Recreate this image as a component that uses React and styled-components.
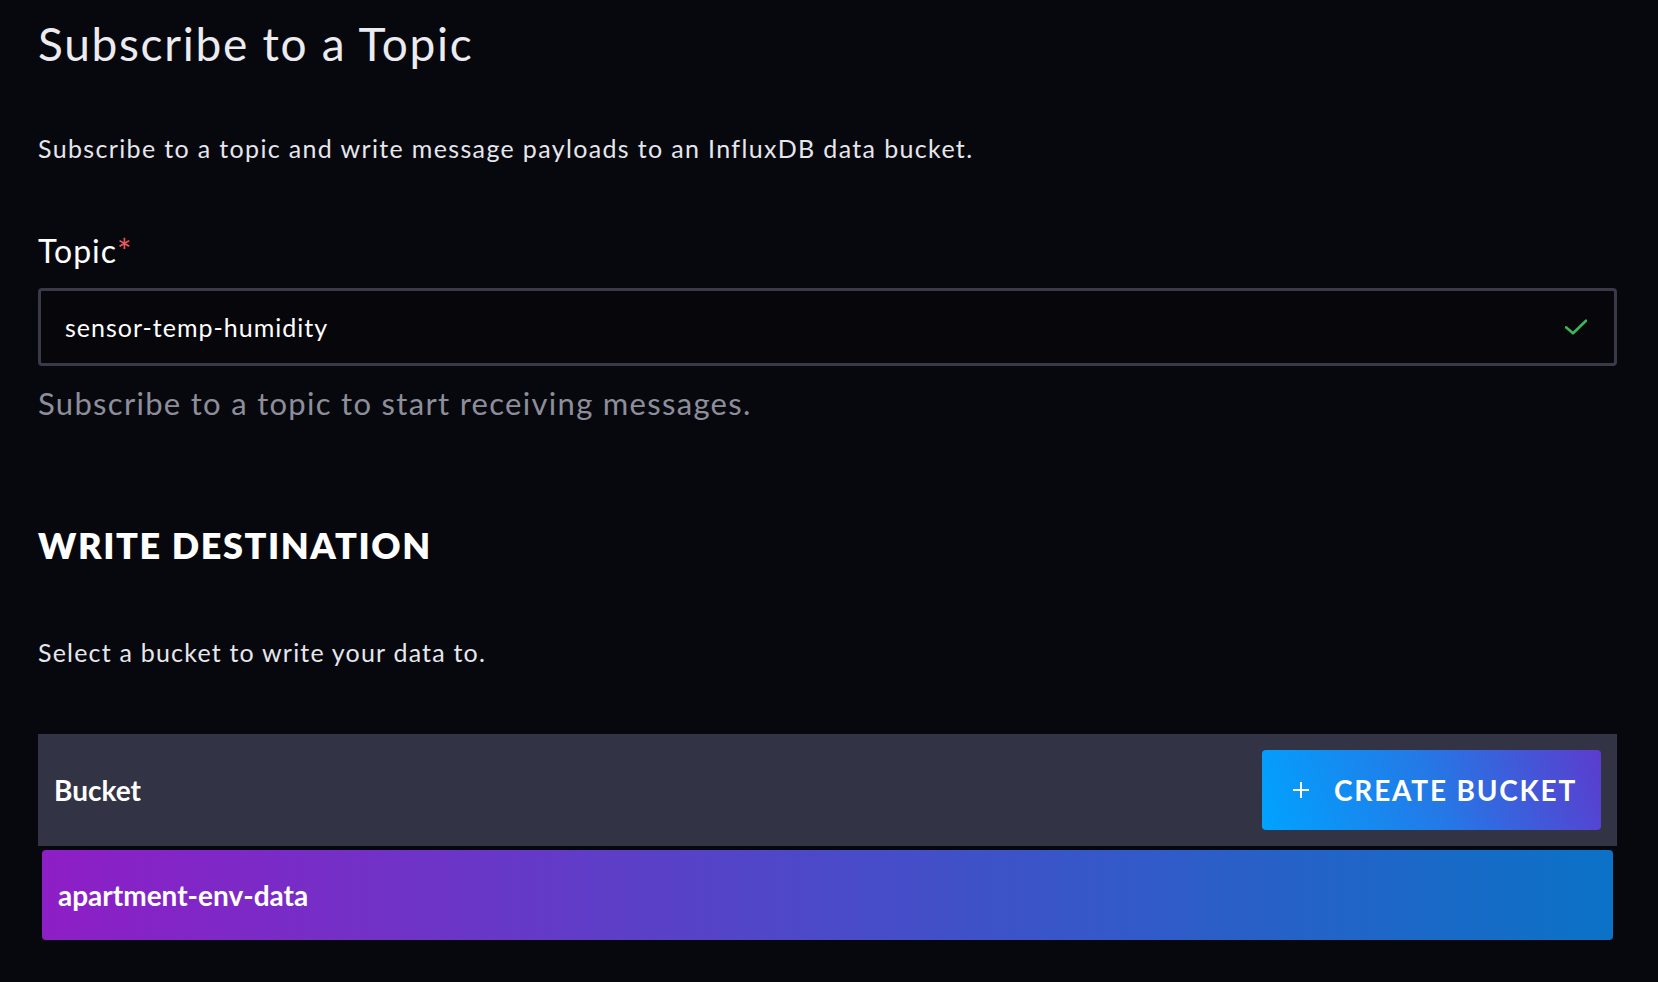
import React from "react";
import styled, { createGlobalStyle } from "styled-components";

const GlobalStyle = createGlobalStyle`
    html, body {
        margin: 0;
        padding: 0;
        background-color: #07080e;
    }
    body {
        font-family: Lato, "Open Sans", sans-serif;
        color: #e7e8ee;
    }
`;

const Page = styled.div`
    display: flex;
    flex-direction: column;
    padding: 16px 41px 40px 38px;
    min-height: 982px;
    box-sizing: border-box;
`;

const Title = styled.h1`
    margin: 0;
    font-size: 46px;
    line-height: 56px;
    font-weight: 400;
    color: #ebebf0;
    letter-spacing: 1.7px;
`;

const Text = styled.p`
    margin: ${(props) => props.mt || 0}px 0 0;
    font-size: ${(props) => props.size || 25}px;
    line-height: ${(props) => props.lh || 34}px;
    color: ${(props) => props.color || "#e6e6ec"};
    letter-spacing: ${(props) => props.ls || 1.3}px;
`;

const Label = styled.label`
    margin-top: 66px;
    font-size: 32px;
    line-height: 40px;
    color: #ffffff;
    display: flex;
    align-items: flex-start;
    letter-spacing: 1px;
`;

const Required = styled.span`
    color: #e85b5b;
    font-size: 34px;
    line-height: 34px;
    margin-top: 3px;
    letter-spacing: 0;
`;

const InputWrap = styled.div`
    margin-top: 17px;
    height: 78px;
    box-sizing: border-box;
    border: 3px solid #393948;
    border-radius: 4px;
    display: flex;
    align-items: center;
    justify-content: space-between;
    padding: 0 27px 0 24px;
    background: #07070b;
`;

const InputText = styled.span`
    font-size: 25px;
    line-height: 34px;
    color: #ffffff;
    letter-spacing: 1px;
`;

const Heading = styled.h2`
    margin: 100px 0 0;
    font-size: 36px;
    line-height: 44px;
    font-weight: 800;
    color: #ffffff;
    letter-spacing: 1.6px;
`;

const BucketHeader = styled.div`
    margin-top: 65px;
    height: 112px;
    background-color: #333346;
    display: flex;
    align-items: center;
    justify-content: space-between;
    padding: 0 16px;
    box-sizing: border-box;
`;

const HeaderLabel = styled.span`
    font-size: 28px;
    font-weight: 700;
    color: #ffffff;
`;

const CreateButton = styled.button`
    height: 80px;
    width: 339px;
    border: none;
    border-radius: 4px;
    background: linear-gradient(70deg, #00a3ff 0%, #2479e6 50%, #5b3cce 100%);
    color: #ffffff;
    display: flex;
    align-items: center;
    padding: 0 0 0 30px;
    gap: 24px;
    font-family: Lato, "Open Sans", sans-serif;
    font-size: 28px;
    font-weight: 700;
    letter-spacing: 1.8px;
    cursor: pointer;
`;

const BucketRow = styled.div`
    margin: 4px 4px 0;
    height: 90px;
    border-radius: 4px;
    background: linear-gradient(90deg, #8e1ec6 0%, #4b4ac8 50%, #0b72c7 100%);
    display: flex;
    align-items: center;
    padding: 0 16px;
    box-sizing: border-box;
`;

const RowName = styled.span`
    font-size: 28px;
    font-weight: 700;
    color: #ffffff;
`;

const CheckIcon = () => (
    <svg width="22" height="16" viewBox="0 0 22 16" fill="none">
        <polyline points="1,8.3 8,14.3 21,1.7" stroke="#3bb65a" strokeWidth="2.6" strokeLinecap="round" strokeLinejoin="round" />
    </svg>
);

const PlusIcon = () => (
    <svg width="18" height="18" viewBox="0 0 18 18">
        <path d="M9 1v16M1 9h16" stroke="#ffffff" strokeWidth="2" />
    </svg>
);

const App = () => {
    return (
        <>
            <GlobalStyle />
            <Page>
                <Title>Subscribe to a Topic</Title>
                <Text mt={59} ls={1.35}>
                    Subscribe to a topic and write message payloads to an InfluxDB data bucket.
                </Text>

                <Label>
                    Topic<Required>*</Required>
                </Label>
                <InputWrap>
                    <InputText>sensor-temp-humidity</InputText>
                    <CheckIcon />
                </InputWrap>
                <Text mt={17} size={31} lh={40} color="#8e8e9b" ls={1.3}>
                    Subscribe to a topic to start receiving messages.
                </Text>

                <Heading>WRITE DESTINATION</Heading>
                <Text mt={68} ls={1.2}>Select a bucket to write your data to.</Text>

                <BucketHeader>
                    <HeaderLabel>Bucket</HeaderLabel>
                    <CreateButton>
                        <PlusIcon />
                        CREATE BUCKET
                    </CreateButton>
                </BucketHeader>
                <BucketRow>
                    <RowName>apartment-env-data</RowName>
                </BucketRow>
            </Page>
        </>
    );
};

export default App;
